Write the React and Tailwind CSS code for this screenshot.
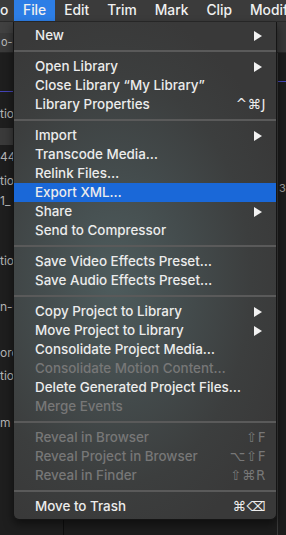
import clsx from "clsx";

const Arrow = () => (
  <svg width="8" height="10" viewBox="0 0 8 10" className="mr-[4px] shrink-0">
    <polygon points="0,0 8,5 0,10" fill="#f2f2f2" />
  </svg>
);

const Item = ({ label, shortcut, arrow, disabled, active }) => (
  <div
    className={clsx(
      "flex items-center h-[19px] pl-[21px] pr-[10px]",
      active && "bg-[#1a68d8]"
    )}
  >
    <span
      className={clsx(
        "flex-1 whitespace-nowrap",
        disabled ? "text-[#777777]" : "text-[#ececec]"
      )}
    >
      {label}
    </span>
    {arrow && <Arrow />}
    {shortcut && (
      <span
        className={clsx(
          "font-['DejaVu_Sans',sans-serif] text-[13.5px] tracking-[0.5px]",
          disabled ? "text-[#777777]" : "text-[#ececec]"
        )}
      >
        {shortcut}
      </span>
    )}
  </div>
);

const Sep = () => (
  <div className="py-[5px]">
    <div className="h-[2px] bg-[#5a5a5a]" />
  </div>
);

const groups = [
  [{ label: "New", arrow: true }],
  [
    { label: "Open Library", arrow: true },
    { label: "Close Library “My Library”" },
    { label: "Library Properties", shortcut: "^⌘J" },
  ],
  [
    { label: "Import", arrow: true },
    { label: "Transcode Media…" },
    { label: "Relink Files…" },
    { label: "Export XML…", active: true },
    { label: "Share", arrow: true },
    { label: "Send to Compressor" },
  ],
  [
    { label: "Save Video Effects Preset…" },
    { label: "Save Audio Effects Preset…" },
  ],
  [
    { label: "Copy Project to Library", arrow: true },
    { label: "Move Project to Library", arrow: true },
    { label: "Consolidate Project Media…" },
    { label: "Consolidate Motion Content…", disabled: true },
    { label: "Delete Generated Project Files…" },
    { label: "Merge Events", disabled: true },
  ],
  [
    { label: "Reveal in Browser", shortcut: "⇧F", disabled: true },
    { label: "Reveal Project in Browser", shortcut: "⌥⇧F", disabled: true },
    { label: "Reveal in Finder", shortcut: "⇧⌘R", disabled: true },
  ],
  [{ label: "Move to Trash", shortcut: "⌘⌫" }],
];

const MenuBar = () => (
  <div className="flex h-[22px] items-center bg-[#3b3b3b] text-[13.8px] font-medium text-[#f0f0f0] border-b border-[#2a2a2a] whitespace-nowrap">
    <span className="w-[14px] shrink-0 overflow-hidden">o</span>
    <span className="shrink-0 h-full flex items-center px-[9px] bg-[#2d7ee6]">File</span>
    <span className="shrink-0 px-[9px]">Edit</span>
    <span className="shrink-0 px-[9px]">Trim</span>
    <span className="shrink-0 px-[9px]">Mark</span>
    <span className="shrink-0 px-[9px]">Clip</span>
    <span className="shrink-0 px-[9px]">Modify</span>
  </div>
);

const Frag = ({ h, children, className }) => (
  <div className={clsx("flex items-center text-[12px] text-[#b5b5b5] whitespace-nowrap", className)} style={{ height: h }}>
    {children}
  </div>
);

const LeftPanel = () => (
  <div className="w-[64px] shrink-0 flex flex-col border-r border-[#0e0e0e] bg-[#1e1e1e]">
    <div className="h-[11px] bg-[#414141]" />
    <div className="h-[20px] bg-[#3a3a3a] border-b border-[#262626] flex items-center text-[#bdbdbd] text-[11px] pl-[1px]">o-m</div>
    <div className="h-[38px]" />
    <div className="h-[1px] bg-[#4444b8]" />
    <Frag h={36} className="pt-[8px]">tio</Frag>
    <div className="h-[17px] bg-[#3a3a3a]" />
    <Frag h={24}>44</Frag>
    <Frag h={24}>tio</Frag>
    <Frag h={16}>1_</Frag>
    <div className="h-[40px]" />
    <Frag h={24}>tio</Frag>
    <div className="h-[22px]" />
    <Frag h={24}>n-C</Frag>
    <div className="h-[22px]" />
    <Frag h={24}>orc</Frag>
    <Frag h={22}>tio</Frag>
    <div className="h-[24px]" />
    <Frag h={24}>m</Frag>
    <div className="flex-1" />
  </div>
);

const RightPanel = () => (
  <div className="flex-1 flex flex-col bg-[#1c1c1c]">
    <div className="h-[31px] bg-[#383838] border-b border-[#262626]" />
    <div className="flex-1 flex">
      <div className="flex-1" />
      <div className="w-[9px] border-l border-[#3a3a3a] flex flex-col">
        <div className="h-[28px]" />
        <div className="h-[1px] bg-[#4444b8]" />
        <div className="h-[98px]" />
        <div className="text-[11px] text-[#9a9a9a] pl-[1px]">3</div>
      </div>
    </div>
  </div>
);

export default function App() {
  return (
    <div className="relative w-[286px] h-[535px] overflow-hidden bg-[#1c1c1c] font-['Inter',sans-serif]">
      <MenuBar />
      <div className="flex h-[513px]">
        <LeftPanel />
        <RightPanel />
      </div>
      <div className="absolute left-[13px] top-[22px] w-[264px] pt-[4px] pb-[3px] rounded-b-[6px] border border-t-0 border-[#151515] text-[13.4px] font-medium leading-[19px] bg-[radial-gradient(ellipse_70%_55%_at_38%_52%,#4e5c5d_0%,#444c4d_40%,#3c3e3e_75%,#393939_100%)] shadow-[0_4px_10px_rgba(0,0,0,0.5)]">
        {groups.map((g, i) => (
          <div key={i}>
            {i > 0 && <Sep />}
            {g.map((it) => (
              <Item key={it.label} {...it} />
            ))}
          </div>
        ))}
      </div>
    </div>
  );
}
